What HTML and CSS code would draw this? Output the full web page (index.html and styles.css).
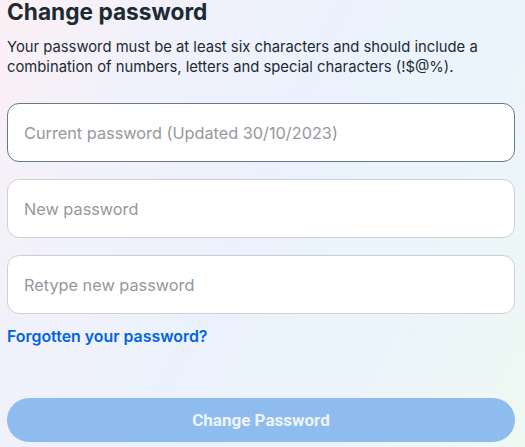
FILE: index.html
```html
<!DOCTYPE html>
<html lang="en">
<head>
<meta charset="utf-8">
<title>Change password</title>
<link rel="stylesheet" href="styles.css">
</head>
<body>
<main class="panel">
  <h1 class="title">Change password</h1>
  <p class="desc">Your password must be at least six characters and should include a combination of numbers, letters and special characters (!$@%).</p>
  <form class="form">
    <div class="field field-active"><input type="password" placeholder="Current password (Updated 30/10/2023)"></div>
    <div class="field"><input type="password" placeholder="New password"></div>
    <div class="field"><input type="password" placeholder="Retype new password"></div>
    <a class="forgot" href="#">Forgotten your password?</a>
    <button type="button" class="submit">Change Password</button>
  </form>
</main>
</body>
</html>
```

FILE: styles.css
```css
html, body {
  margin: 0;
  padding: 0;
  height: 100%;
}
body {
  background: linear-gradient(115deg, #fcf0f4 0%, #f1f1fb 22%, #ebf2fd 50%, #ebf4fb 72%, #eef9f3 100%);
  font-family: "Inter", "Noto Sans", sans-serif;
  color: #1c2b33;
  overflow: hidden;
}
.panel {
  padding: 0 10px 0 7px;
}
.title {
  margin: 0;
  font-size: 22.7px;
  line-height: 24px;
  font-weight: 700;
}
.desc {
  margin: 13px 0 0;
  font-size: 14.8px;
  line-height: 20px;
  color: #1c2b33;
}
.form {
  display: flex;
  flex-direction: column;
  margin-top: 26px;
}
.field {
  height: 57px;
  border: 1px solid #ced0d4;
  border-radius: 12px;
  background: #fff;
  display: flex;
  align-items: center;
  margin-bottom: 17px;
}
.field-active {
  border-color: #67788a;
}
.field input {
  border: 0;
  outline: 0;
  background: transparent;
  width: 100%;
  padding: 0 16px;
  font-family: inherit;
  font-size: 16.3px;
  color: #1c2b33;
}
.field input::placeholder {
  color: #95989c;
}
.forgot {
  align-self: flex-start;
  margin-top: -4px;
  font-size: 15.9px;
  line-height: 20px;
  font-weight: 600;
  color: #0064e0;
  text-decoration: none;
}
.submit {
  margin-top: 51px;
  height: 44px;
  border: 0;
  border-radius: 22px;
  background: #8fbcef;
  color: #eef4fc;
  font-family: "Roboto", "Liberation Sans", sans-serif;
  font-size: 17px;
  font-weight: 700;
}
```
